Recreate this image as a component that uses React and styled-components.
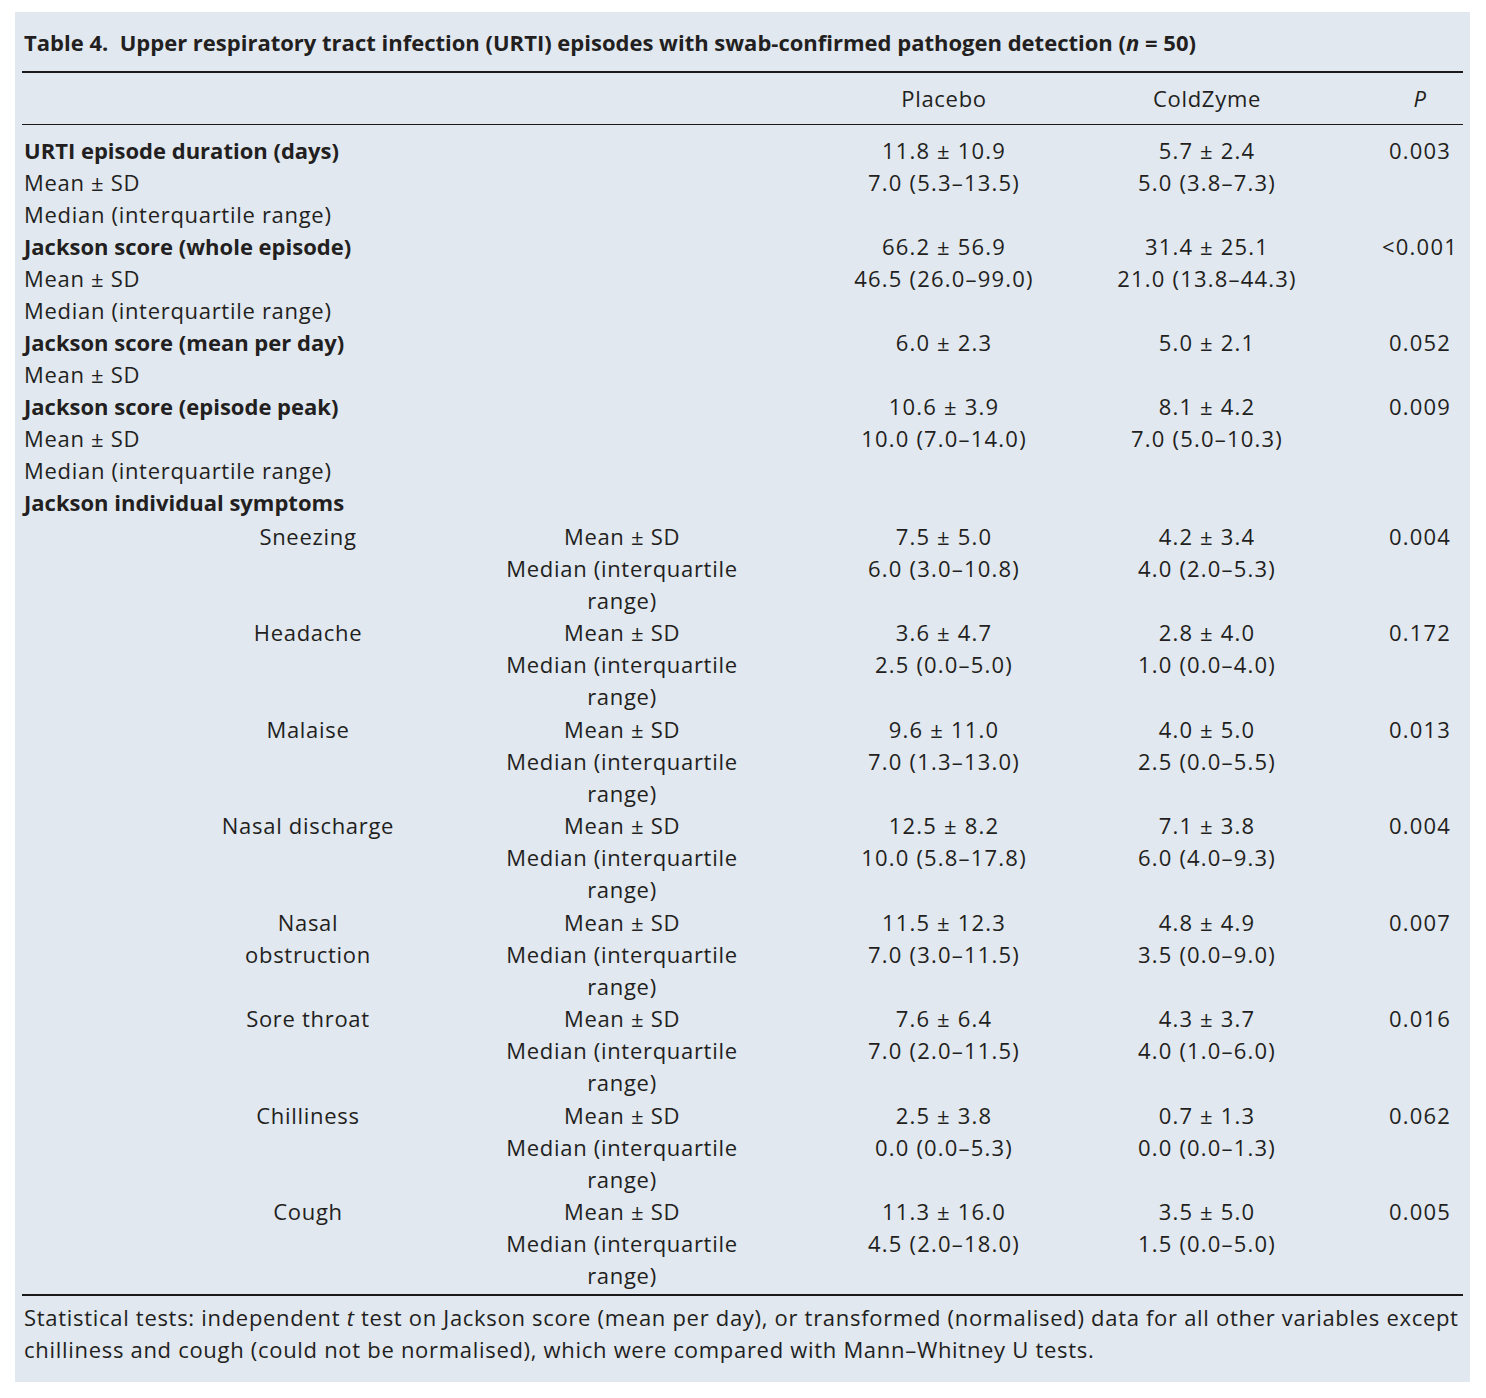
import React from "react";
import styled, { createGlobalStyle } from "styled-components";

const Global = createGlobalStyle`
  html, body { margin: 0; padding: 0; background: #ffffff; }
  body { font-family: "Open Sans", "Noto Sans", sans-serif; color: #231f20; }
`;

const Page = styled.div`
  padding: 12px 0 15px 15px;
`;

const Panel = styled.section`
  width: 1455px;
  background: #e1e8f0;
  padding: 14px 7px 17px 7px;
  box-sizing: border-box;
  font-size: 22px;
  letter-spacing: 0.7px;
  line-height: 32px;
`;

const Title = styled.h1`
  margin: 0 0 13px 2px;
  font-size: 22px;
  font-weight: 700;
  letter-spacing: 0;
  line-height: 32px;
  white-space: nowrap;
`;

const Rule = styled.div`
  height: ${(p) => p.$w}px;
  background: #1a1a1a;
`;

const columns = "[label] 475px [sub] 250px 36px [placebo] 322px [cold] 204px 71px [p] 80px 3px";

const Grid = styled.div`
  display: grid;
  grid-template-columns: ${columns};
  padding: ${(p) => p.$pad || "0"};
`;

const Label = styled.div`
  grid-column: label / span 2;
  padding-left: 2px;
  font-weight: ${(p) => (p.$bold ? 700 : 400)};
  letter-spacing: ${(p) => (p.$bold ? "0" : "0.7px")};
  white-space: nowrap;
`;

const Symptom = styled.div`
  grid-column: label;
  padding-left: 196px;
  width: 180px;
  text-align: center;
  white-space: nowrap;
`;

const Val = styled.div`
  grid-column: ${(p) => p.$col};
  text-align: center;
  white-space: nowrap;
  letter-spacing: ${(p) => (p.$num ? "1.2px" : "0.7px")};
  font-style: ${(p) => (p.$italic ? "italic" : "normal")};
`;

const Group = styled.div`
  display: grid;
  grid-template-columns: ${columns};
  padding-top: ${(p) => p.$top || 0}px;
  margin-bottom: 0.43px;
`;

const Stack = styled.div`
  grid-column: ${(p) => p.$col};
  display: flex;
  flex-direction: column;
  align-items: center;
  text-align: center;
  white-space: nowrap;
  letter-spacing: ${(p) => (p.$num ? "1.2px" : "0.7px")};
`;

const Spacer = styled.div`
  height: 3px;
`;

const Footer = styled.p`
  margin: 5px 0 0 2px;
  font-size: 22px;
  letter-spacing: 0.7px;
  line-height: 32px;
  white-space: nowrap;
`;

const mainRows = [
  { label: "URTI episode duration (days)", bold: true, a: "11.8 ± 10.9", b: "5.7 ± 2.4", p: "0.003" },
  { label: "Mean ± SD", a: "7.0 (5.3–13.5)", b: "5.0 (3.8–7.3)" },
  { label: "Median (interquartile range)" },
  { label: "Jackson score (whole episode)", bold: true, a: "66.2 ± 56.9", b: "31.4 ± 25.1", p: "<0.001" },
  { label: "Mean ± SD", a: "46.5 (26.0–99.0)", b: "21.0 (13.8–44.3)" },
  { label: "Median (interquartile range)" },
  { label: "Jackson score (mean per day)", bold: true, a: "6.0 ± 2.3", b: "5.0 ± 2.1", p: "0.052" },
  { label: "Mean ± SD" },
  { label: "Jackson score (episode peak)", bold: true, a: "10.6 ± 3.9", b: "8.1 ± 4.2", p: "0.009" },
  { label: "Mean ± SD", a: "10.0 (7.0–14.0)", b: "7.0 (5.0–10.3)" },
  { label: "Median (interquartile range)" },
  { label: "Jackson individual symptoms", bold: true },
];

const symptoms = [
  { name: ["Sneezing"], a: ["7.5 ± 5.0", "6.0 (3.0–10.8)"], b: ["4.2 ± 3.4", "4.0 (2.0–5.3)"], p: "0.004" },
  { name: ["Headache"], a: ["3.6 ± 4.7", "2.5 (0.0–5.0)"], b: ["2.8 ± 4.0", "1.0 (0.0–4.0)"], p: "0.172" },
  { name: ["Malaise"], a: ["9.6 ± 11.0", "7.0 (1.3–13.0)"], b: ["4.0 ± 5.0", "2.5 (0.0–5.5)"], p: "0.013" },
  { name: ["Nasal discharge"], a: ["12.5 ± 8.2", "10.0 (5.8–17.8)"], b: ["7.1 ± 3.8", "6.0 (4.0–9.3)"], p: "0.004" },
  { name: ["Nasal", "obstruction"], a: ["11.5 ± 12.3", "7.0 (3.0–11.5)"], b: ["4.8 ± 4.9", "3.5 (0.0–9.0)"], p: "0.007" },
  { name: ["Sore throat"], a: ["7.6 ± 6.4", "7.0 (2.0–11.5)"], b: ["4.3 ± 3.7", "4.0 (1.0–6.0)"], p: "0.016" },
  { name: ["Chilliness"], a: ["2.5 ± 3.8", "0.0 (0.0–5.3)"], b: ["0.7 ± 1.3", "0.0 (0.0–1.3)"], p: "0.062" },
  { name: ["Cough"], a: ["11.3 ± 16.0", "4.5 (2.0–18.0)"], b: ["3.5 ± 5.0", "1.5 (0.0–5.0)"], p: "0.005" },
];

export default function App() {
  return (
    <Page>
      <Global />
      <Panel>
        <Title>
          Table 4.&nbsp; Upper respiratory tract infection (URTI) episodes with swab-confirmed pathogen detection (<i>n</i> = 50)
        </Title>
        <Rule $w={2} />
        <Grid $pad="9px 0 10px 0">
          <Val $col="placebo">Placebo</Val>
          <Val $col="cold">ColdZyme</Val>
          <Val $col="p" $italic>P</Val>
        </Grid>
        <Rule $w={1} />
        <Grid $pad="9px 0 0 0">
          {mainRows.map((r, i) => (
            <React.Fragment key={i}>
              <Label $bold={r.bold} style={{ gridRow: i + 1 }}>{r.label}</Label>
              {r.a && <Val $num $col="placebo" style={{ gridRow: i + 1 }}>{r.a}</Val>}
              {r.b && <Val $num $col="cold" style={{ gridRow: i + 1 }}>{r.b}</Val>}
              {r.p && <Val $num $col="p" style={{ gridRow: i + 1 }}>{r.p}</Val>}
            </React.Fragment>
          ))}
        </Grid>
        {symptoms.map((s, i) => (
          <Group key={i} $top={i === 0 ? 2 : 0}>
            <Symptom>
              {s.name.map((n, j) => (
                <div key={j}>{n}</div>
              ))}
            </Symptom>
            <Stack $col="sub">
              <div>Mean ± SD</div>
              <div>Median (interquartile</div>
              <div>range)</div>
            </Stack>
            <Stack $num $col="placebo">
              <div>{s.a[0]}</div>
              <div>{s.a[1]}</div>
            </Stack>
            <Stack $num $col="cold">
              <div>{s.b[0]}</div>
              <div>{s.b[1]}</div>
            </Stack>
            <Stack $num $col="p">
              <div>{s.p}</div>
            </Stack>
          </Group>
        ))}
        <Spacer />
        <Rule $w={2} />
        <Footer>
          Statistical tests: independent <i>t</i> test on Jackson score (mean per day), or transformed (normalised) data for all other variables except
          <br />
          chilliness and cough (could not be normalised), which were compared with Mann–Whitney U tests.
        </Footer>
      </Panel>
    </Page>
  );
}
